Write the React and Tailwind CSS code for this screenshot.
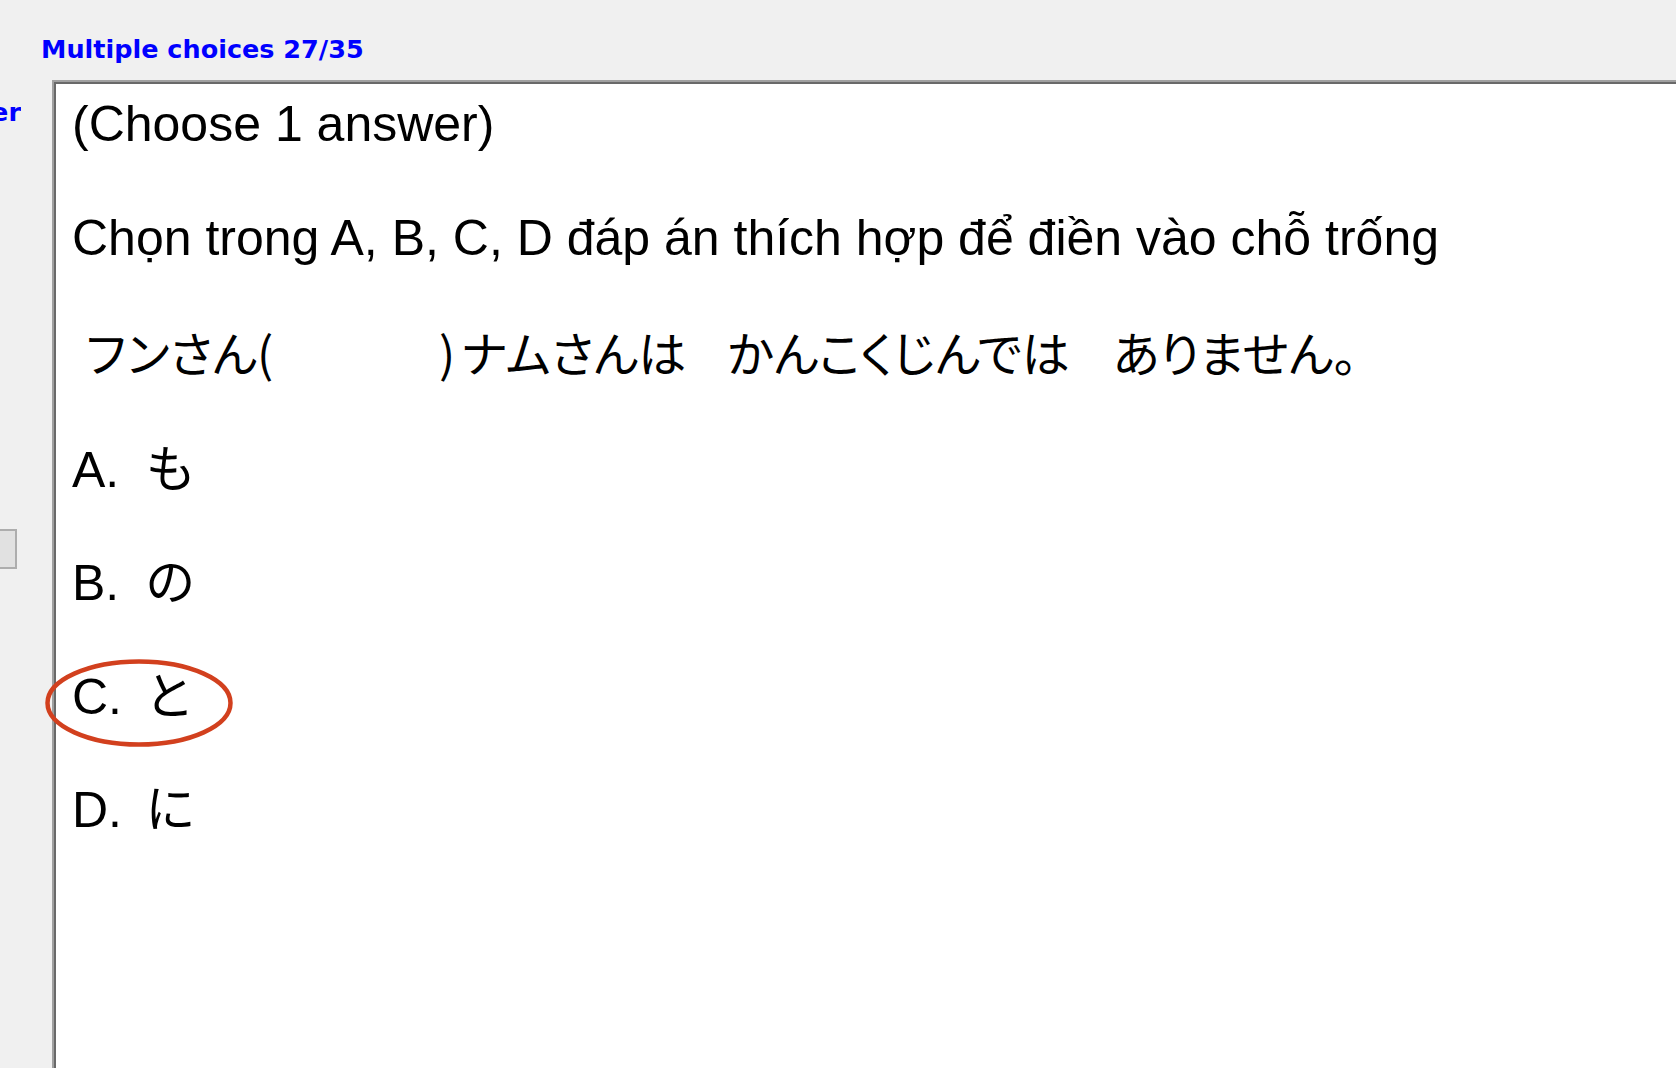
import React from "react";

const body = "font-['Liberation_Sans','Noto_Sans_CJK_JP',sans-serif]";
const jp = "font-['Noto_Sans_CJK_JP',sans-serif] [font-feature-settings:'palt']";

function Option({ letter, kana, circled }) {
  return (
    <div className="relative h-[56px] leading-[56px] whitespace-nowrap">
      <span className="inline-block w-[74px]">{letter}.</span>
      <span className={jp}>{kana}</span>
      {circled && (
        <svg
          className="absolute left-[-28px] top-[-6px] pointer-events-none"
          width="190"
          height="92"
          viewBox="0 0 190 92"
        >
          <ellipse cx="95" cy="45" rx="91.5" ry="41.5" fill="none" stroke="#d2401e" strokeWidth="4.5" />
        </svg>
      )}
    </div>
  );
}

export default function App() {
  return (
    <div className="w-full h-[1068px] bg-[#f0f0f0] overflow-hidden flex flex-col">
      <div className="h-[80px] shrink-0 pt-[34px] pl-[41px]">
        <div className="font-['DejaVu_Sans',sans-serif] font-bold text-[25.5px] leading-[30px] text-[#0000ff] whitespace-nowrap">
          Multiple choices 27/35
        </div>
      </div>
      <div className="flex flex-1 min-h-0">
        <div className="w-[52px] shrink-0 flex flex-col">
          <div className="w-[21px] mt-[17px] overflow-hidden flex justify-end">
            <span className="font-['DejaVu_Sans',sans-serif] font-bold text-[25.5px] leading-[30px] text-[#0000ff] whitespace-nowrap">
              Answer
            </span>
          </div>
          <div className="mt-[402px] w-[17px] h-[40px] border-2 border-l-0 border-[#adadad] bg-[#e1e1e1]" />
        </div>
        <div className="flex-1 border-t-2 border-l-2 border-[#a0a0a0] flex flex-col">
          <div className={`flex-1 border-t-2 border-l-2 border-[#696969] bg-white pt-[12px] pl-[16px] text-black text-[50px] ${body}`}>
            <div className="flex flex-col gap-[57.5px]">
              <div className="h-[56px] leading-[56px] whitespace-nowrap">(Choose 1 answer)</div>
              <div className="h-[56px] leading-[56px] whitespace-nowrap">
                Chọn trong A, B, C, D đáp án thích hợp để điền vào chỗ trống
              </div>
              <div className="h-[56px] leading-[56px] whitespace-pre">
                <span>{" "}</span>
                <span className={`${jp} text-[48px]`}>
                  フンさん(　　　 <span className="ml-[11px] mr-[6px]">)</span>ナムさんは<span className="tracking-[-7px]">　</span>かんこくじんでは<span className="tracking-[-5px]">　</span>ありません。
                </span>
              </div>
              <Option letter="A" kana="も" />
              <Option letter="B" kana="の" />
              <Option letter="C" kana="と" circled />
              <Option letter="D" kana="に" />
            </div>
          </div>
        </div>
      </div>
    </div>
  );
}
